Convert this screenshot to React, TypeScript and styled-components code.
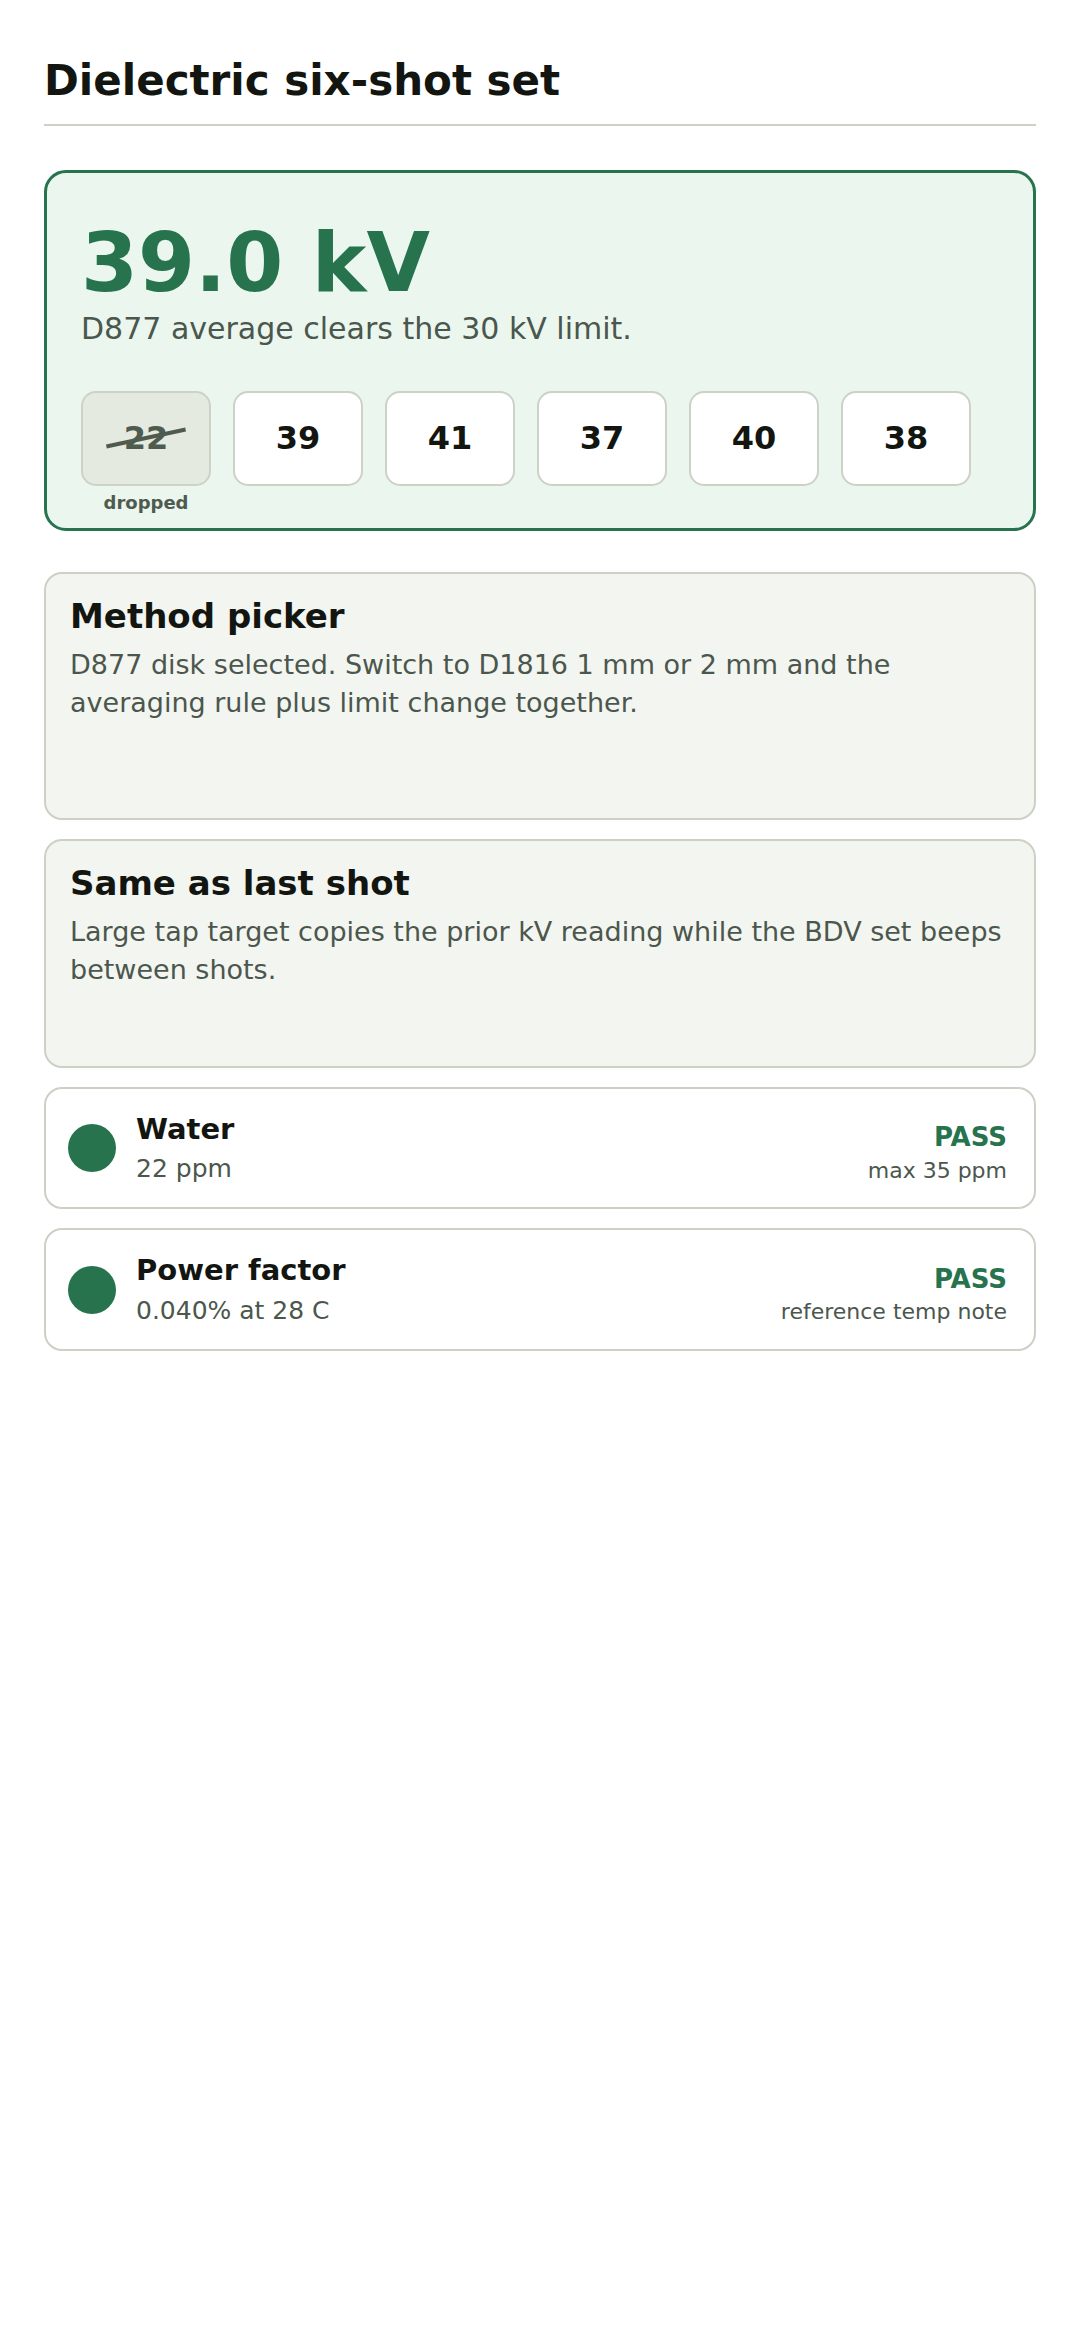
import styled, { createGlobalStyle } from 'styled-components';

const shots = [
	{ kv: 22, dropped: true },
	{ kv: 39 },
	{ kv: 41 },
	{ kv: 37 },
	{ kv: 40 },
	{ kv: 38 },
];

const checks = [
	{ name: 'Water', value: '22 ppm', result: 'PASS', note: 'max 35 ppm' },
	{ name: 'Power factor', value: '0.040% at 28 C', result: 'PASS', note: 'reference temp note' },
];

export default function App() {
	return (
		<>
			<GlobalStyle />
			<Page>
				<Header>
					<h1>Dielectric six-shot set</h1>
				</Header>

				<ResultCard>
					<BigValue>39.0 kV</BigValue>
					<ResultNote>D877 average clears the 30 kV limit.</ResultNote>
					<ShotRow>
						{shots.map((s, i) => (
							<ShotCell key={i}>
								<ShotTile $dropped={s.dropped}>
									<span>{s.kv}</span>
								</ShotTile>
								{s.dropped && <DroppedLabel>dropped</DroppedLabel>}
							</ShotCell>
						))}
					</ShotRow>
				</ResultCard>

				<InfoCard $minHeight={248}>
					<h2>Method picker</h2>
					<p>
						D877 disk selected. Switch to D1816 1 mm or 2 mm and the averaging rule plus limit change
						together.
					</p>
				</InfoCard>

				<InfoCard $minHeight={229}>
					<h2>Same as last shot</h2>
					<p>Large tap target copies the prior kV reading while the BDV set beeps between shots.</p>
				</InfoCard>

				{checks.map((c) => (
					<CheckRow key={c.name}>
						<Dot />
						<CheckText>
							<h3>{c.name}</h3>
							<p>{c.value}</p>
						</CheckText>
						<CheckResult>
							<strong>{c.result}</strong>
							<span>{c.note}</span>
						</CheckResult>
					</CheckRow>
				))}
			</Page>
		</>
	);
}

const GlobalStyle = createGlobalStyle`
	* {
		box-sizing: border-box;
	}

	body {
		margin: 0;
		background: #ffffff;
		font-family: 'DejaVu Sans', 'Noto Sans', sans-serif;
		color: #131610;
	}
`;

const Page = styled.div`
	width: 1080px;
	min-height: 2340px;

	display: flex;
	flex-direction: column;
	gap: 19px;

	padding: 56px 44px;
`;

const Header = styled.header`
	padding-bottom: 18px;
	border-bottom: 2px solid #cdd1c6;
	margin-bottom: 25px;

	h1 {
		margin: 0;
		font-size: 42px;
		line-height: 1.2;
		font-weight: 700;
		color: #131610;
	}
`;

const ResultCard = styled.section`
	display: flex;
	flex-direction: column;

	background-color: #eaf6ee;
	border: 3px solid #26734d;
	border-radius: 22px;
	padding: 45px 34px 14px;
	margin-bottom: 22px;
`;

const BigValue = styled.div`
	font-size: 82px;
	line-height: 1.1;
	font-weight: 700;
	color: #26734d;
`;

const ResultNote = styled.p`
	margin: 0;
	font-size: 30px;
	line-height: 1.3;
	color: #4b574d;
`;

const ShotRow = styled.div`
	display: flex;
	flex-direction: row;
	gap: 22px;
	margin-top: 43px;
`;

const ShotCell = styled.div`
	display: flex;
	flex-direction: column;
	align-items: center;
	gap: 6px;
`;

const ShotTile = styled.div<{ $dropped?: boolean }>`
	width: 130px;
	height: 95px;

	display: flex;
	justify-content: center;
	align-items: center;

	background-color: ${({ $dropped }) => ($dropped ? '#e4eae0' : '#ffffff')};
	border: 2px solid #cdd2c6;
	border-radius: 15px;

	span {
		position: relative;
		font-size: 32px;
		font-weight: 700;
		color: ${({ $dropped }) => ($dropped ? '#4f5b4f' : '#131610')};
	}

	${({ $dropped }) =>
		$dropped &&
		`
		span::after {
			content: '';
			position: absolute;
			left: 50%;
			top: 50%;
			width: 81px;
			height: 4px;
			background: #4f5b4f;
			transform: translate(-50%, -50%) rotate(-12deg);
		}
	`}
`;

const DroppedLabel = styled.span`
	font-size: 18px;
	line-height: 22px;
	font-weight: 700;
	color: #4f5b4f;
`;

const InfoCard = styled.section<{ $minHeight: number }>`
	min-height: ${({ $minHeight }) => $minHeight}px;

	display: flex;
	flex-direction: column;
	gap: 10px;

	background-color: #f3f5f0;
	border: 2px solid #cdd1c5;
	border-radius: 18px;
	padding: 22px 24px;

	h2 {
		margin: 0;
		font-size: 34px;
		line-height: 1.2;
		font-weight: 700;
		color: #131610;
	}

	p {
		margin: 0;
		font-size: 27px;
		line-height: 1.4;
		color: #4b574d;
	}
`;

const CheckRow = styled.div`
	display: flex;
	flex-direction: row;
	align-items: flex-end;
	gap: 20px;

	background-color: #ffffff;
	border: 2px solid #cdd1c5;
	border-radius: 18px;
	padding: 22px 27px 22px 22px;
`;

const Dot = styled.div`
	width: 48px;
	height: 48px;
	flex-shrink: 0;
	align-self: center;

	border-radius: 50%;
	background-color: #26734d;
`;

const CheckText = styled.div`
	flex: 1;

	display: flex;
	flex-direction: column;
	gap: 6px;

	h3 {
		margin: 0;
		font-size: 29px;
		line-height: 1.25;
		font-weight: 700;
		color: #131610;
	}

	p {
		margin: 0;
		font-size: 25px;
		line-height: 1.3;
		color: #4b574d;
	}
`;

const CheckResult = styled.div`
	display: flex;
	flex-direction: column;
	align-items: flex-end;
	gap: 3px;

	strong {
		font-size: 26px;
		line-height: 1.25;
		font-weight: 700;
		color: #26734d;
	}

	span {
		font-size: 22px;
		line-height: 1.3;
		color: #4b574d;
	}
`;
